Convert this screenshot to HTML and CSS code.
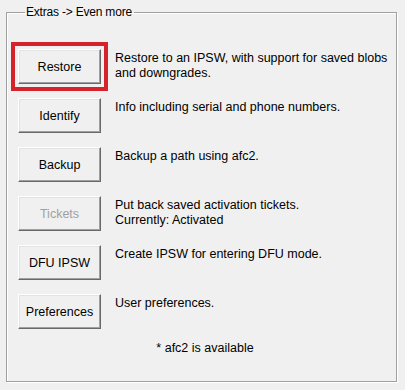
FILE: index.html
```html
<!DOCTYPE html>
<html lang="en">
<head>
    <meta charset="UTF-8">
    <meta name="viewport" content="width=device-width, initial-scale=1.0">
    <title>Extras</title>
    <link rel="stylesheet" href="styles.css">
</head>
<body>
    <fieldset class="group">
        <legend>Extras -&gt; Even more</legend>

        <div class="actions">
            <div class="action">
                <button class="btn highlighted">Restore</button>
                <p class="desc">Restore to an IPSW, with support for saved blobs and downgrades.</p>
            </div>
            <div class="action">
                <button class="btn">Identify</button>
                <p class="desc">Info including serial and phone numbers.</p>
            </div>
            <div class="action">
                <button class="btn">Backup</button>
                <p class="desc">Backup a path using afc2.</p>
            </div>
            <div class="action">
                <button class="btn" disabled>Tickets</button>
                <p class="desc">Put back saved activation tickets.<br>Currently: Activated</p>
            </div>
            <div class="action">
                <button class="btn">DFU IPSW</button>
                <p class="desc">Create IPSW for entering DFU mode.</p>
            </div>
            <div class="action">
                <button class="btn">Preferences</button>
                <p class="desc">User preferences.</p>
            </div>
        </div>

        <p class="note">* afc2 is available</p>
    </fieldset>
</body>
</html>
```

FILE: styles.css
```css
body {
    margin: 0;
    padding: 4px 8px 0 6px;
    background-color: #f0f0f0;
    color: #000;
    font-family: 'Liberation Sans', Arial, sans-serif;
    font-size: 12px;
    height: 390px;
    box-sizing: border-box;
}

.group {
    margin: 0;
    padding: 29px 4px 0 11px;
    height: 378px;
    box-sizing: border-box;
    border: 1px solid #a0a0a0;
    box-shadow: 1px 1px 0 #fff, inset 1px 1px 0 #fff;
}

.group legend {
    margin-left: 7px;
    padding: 0 2px 0 1px;
    line-height: 16px;
    font-size: 12px;
    letter-spacing: -0.2px;
}

.actions {
    display: flex;
    flex-direction: column;
    gap: 14px;
}

.action {
    display: flex;
    align-items: flex-start;
    gap: 14px;
}

.btn {
    flex: none;
    width: 83px;
    height: 35px;
    padding: 0;
    font-family: inherit;
    font-size: 12.5px;
    color: #000;
    background: #f0f0f0;
    border: 1px solid;
    border-color: #fff #696969 #696969 #fff;
    box-shadow: inset -1px -1px 0 #a0a0a0, inset 1px 1px 0 #e3e3e3;
}

.btn:disabled {
    color: #a0a0a0;
}

.btn.highlighted {
    outline: 4px solid #d5232b;
    outline-offset: 3px;
}

.desc {
    margin: 0;
    padding-top: 2px;
    font-size: 12.5px;
    line-height: 15px;
}

.note {
    margin: 12px 0 0;
    text-align: center;
    font-size: 12.5px;
    line-height: 15px;
}
```
